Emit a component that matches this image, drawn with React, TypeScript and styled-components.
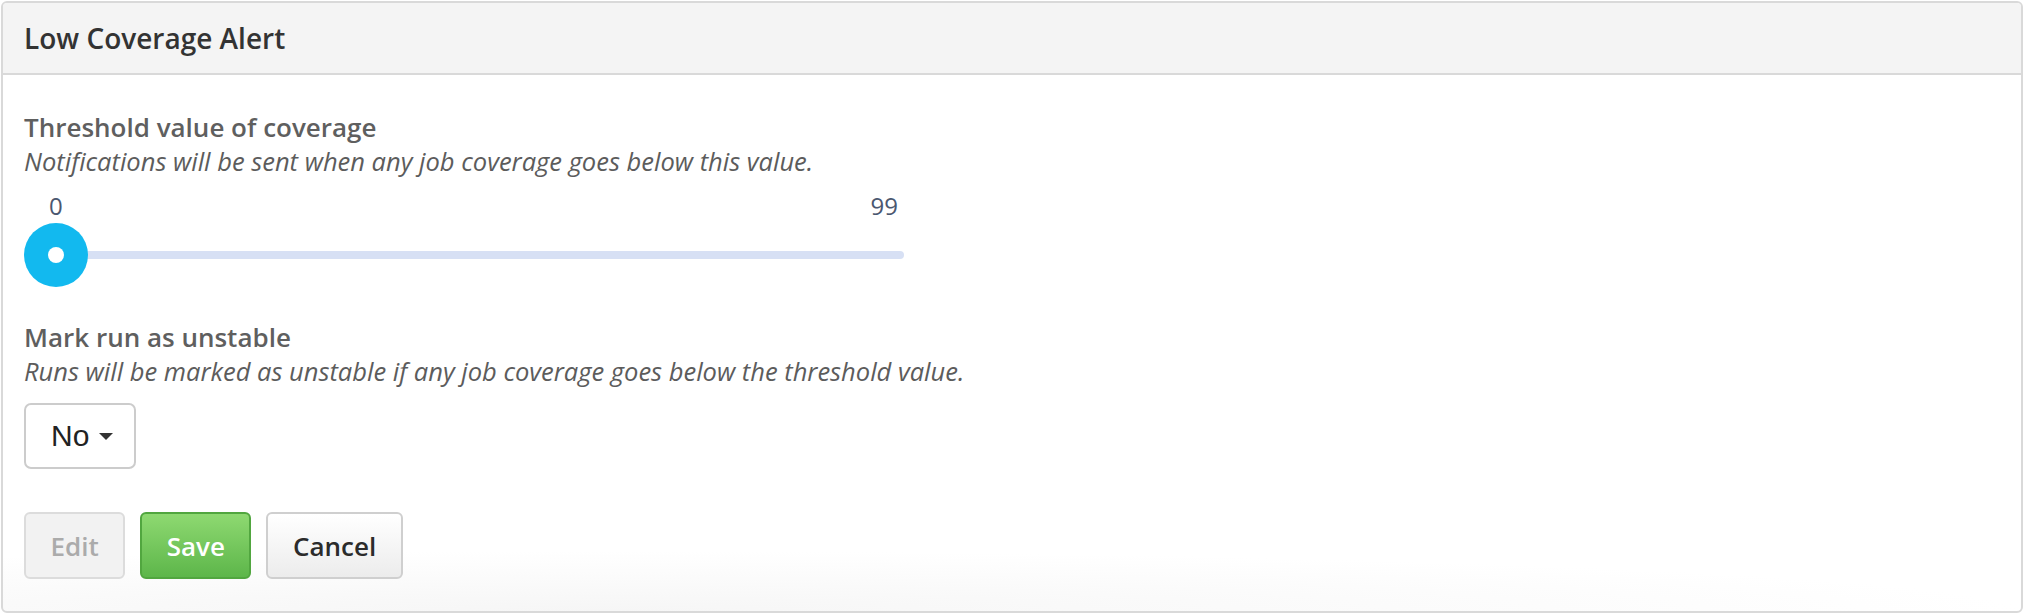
import React from "react";
import styled, { createGlobalStyle } from "styled-components";

const GlobalStyle = createGlobalStyle`
  html, body { margin: 0; padding: 0; background: #ffffff; }
  body { padding: 1px; font-family: "Open Sans", "Liberation Sans", sans-serif; }
  * { box-sizing: border-box; }
`;

const Panel = styled.section`
  width: 2022px;
  height: 612px;
  border: 2px solid #d9d9d9;
  border-radius: 6px;
  overflow: hidden;
  display: flex;
  flex-direction: column;
  background: radial-gradient(ellipse 70% 60px at 30% 100%, #f6f6f6 0%, #ffffff 100%);
`;

const Header = styled.header`
  height: 72px;
  flex: none;
  display: flex;
  align-items: center;
  padding: 0 21px;
  background: #f4f4f4;
  border-bottom: 2px solid #d9d9d9;
`;

const Title = styled.h3`
  margin: 0;
  font-size: 28px;
  line-height: 40px;
  font-weight: 600;
  color: #333333;
`;

const Body = styled.div`
  flex: 1;
  display: flex;
  flex-direction: column;
  padding: 34px 21px 0;
`;

const Field = styled.div<{ $top?: number }>`
  display: flex;
  flex-direction: column;
  margin-top: ${(p) => p.$top ?? 0}px;
`;

const Label = styled.div`
  font-size: 26px;
  line-height: 36px;
  font-weight: 600;
  color: #5f5f5f;
`;

const Help = styled.div`
  font-size: 25.5px;
  line-height: 32px;
  font-style: italic;
  color: #5c5c5c;
`;

const SliderBlock = styled.div`
  width: 880px;
  margin-top: 13px;
  display: flex;
  flex-direction: column;
`;

const Ticks = styled.div`
  display: flex;
  justify-content: space-between;
  padding: 0 6px 0 25px;
  font-size: 24px;
  line-height: 32px;
  color: #4b5770;
`;

const Track = styled.div`
  position: relative;
  height: 64px;
  display: flex;
  align-items: center;
  margin-top: 1px;
`;

const Rail = styled.div`
  flex: 1;
  height: 8px;
  border-radius: 4px;
  background: #d7e0f4;
`;

const Thumb = styled.div`
  position: absolute;
  left: 0;
  top: 0;
  width: 64px;
  height: 64px;
  border-radius: 50%;
  background: #12b9ef;
  display: flex;
  align-items: center;
  justify-content: center;
  &::after {
    content: "";
    width: 16px;
    height: 16px;
    border-radius: 50%;
    background: #ffffff;
  }
`;

const Dropdown = styled.button`
  margin-top: 16px;
  width: 112px;
  height: 66px;
  display: flex;
  align-items: center;
  gap: 10px;
  padding: 0 0 0 25px;
  border: 2px solid #cccccc;
  border-radius: 7px;
  background: #ffffff;
  font-family: "Liberation Sans", Arial, sans-serif;
  font-size: 30px;
  color: #222222;
`;

const Caret = styled.span`
  width: 0;
  height: 0;
  border-left: 7.5px solid transparent;
  border-right: 7.5px solid transparent;
  border-top: 7px solid #333333;
`;

const Actions = styled.div`
  display: flex;
  gap: 15px;
  margin-top: 43px;
`;

type Variant = "disabled" | "success" | "default";

const Button = styled.button<{ $variant: Variant }>`
  height: 67px;
  padding: 0 24.5px;
  border-radius: 6px;
  border: 2px solid;
  font-family: "Open Sans", sans-serif;
  font-size: 26px;
  font-weight: 600;
  line-height: 1;
  ${(p) =>
    p.$variant === "disabled"
      ? `background: #f2f2f2; border-color: #dcdcdc; color: #ababab;`
      : p.$variant === "success"
      ? `background: linear-gradient(#8ed971, #5db64a); border-color: #51a63f; color: #ffffff;`
      : `background: linear-gradient(#ffffff, #ececec); border-color: #cfcfcf; color: #2b2b2b;`}
`;

export default function App() {
  return (
    <>
      <GlobalStyle />
      <Panel>
        <Header>
          <Title>Low Coverage Alert</Title>
        </Header>
        <Body>
          <Field>
            <Label>Threshold value of coverage</Label>
            <Help>Notifications will be sent when any job coverage goes below this value.</Help>
            <SliderBlock>
              <Ticks>
                <span>0</span>
                <span>99</span>
              </Ticks>
              <Track>
                <Rail />
                <Thumb />
              </Track>
            </SliderBlock>
          </Field>
          <Field $top={32}>
            <Label>Mark run as unstable</Label>
            <Help>Runs will be marked as unstable if any job coverage goes below the threshold value.</Help>
            <Dropdown>
              No
              <Caret />
            </Dropdown>
          </Field>
          <Actions>
            <Button $variant="disabled" disabled>Edit</Button>
            <Button $variant="success">Save</Button>
            <Button $variant="default">Cancel</Button>
          </Actions>
        </Body>
      </Panel>
    </>
  );
}
